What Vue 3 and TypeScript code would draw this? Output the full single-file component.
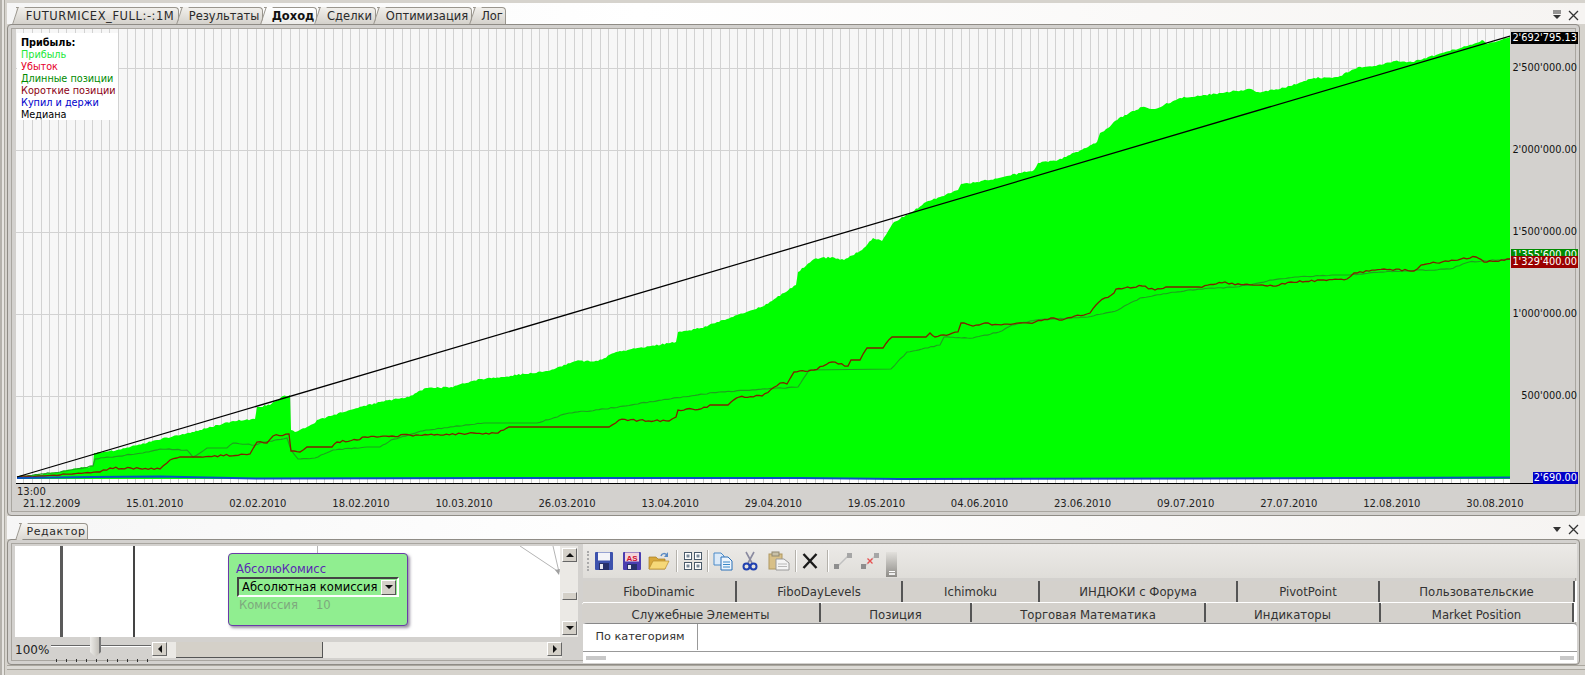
<script setup lang="ts">
type Pt = [number, number];

const topTabs = [
  { label: 'FUTURMICEX_FULL:-:1M', width: 163, active: false },
  { label: 'Результаты', width: 83, active: false },
  { label: 'Доход', width: 53, active: true },
  { label: 'Сделки', width: 58, active: false },
  { label: 'Оптимизация', width: 95, active: false },
  { label: 'Лог', width: 33, active: false },
];

const legend = [
  { label: 'Прибыль:', cls: 'lg-title' },
  { label: 'Прибыль', cls: 'lg-profit' },
  { label: 'Убыток', cls: 'lg-loss' },
  { label: 'Длинные позиции', cls: 'lg-long' },
  { label: 'Короткие позиции', cls: 'lg-short' },
  { label: 'Купил и держи', cls: 'lg-hold' },
  { label: 'Медиана', cls: 'lg-median' },
];

const dates = ['21.12.2009','15.01.2010','02.02.2010','18.02.2010','10.03.2010','26.03.2010','13.04.2010','29.04.2010','19.05.2010','04.06.2010','23.06.2010','09.07.2010','27.07.2010','12.08.2010','30.08.2010'];

const AXIS_TOP = 29;
const axisLabels = [
  { text: "2'692'795.13", y: 37.5, cls: 'ax-black' },
  { text: "2'500'000.00", y: 68, cls: '' },
  { text: "2'000'000.00", y: 150, cls: '' },
  { text: "1'500'000.00", y: 232, cls: '' },
  { text: "1'000'000.00", y: 314, cls: '' },
  { text: "500'000.00", y: 396, cls: '' },
  { text: "1'355'600.00", y: 255, cls: 'ax-green' },
  { text: "1'329'400.00", y: 262, cls: 'ax-red' },
  { text: "2'690.00", y: 477.5, cls: 'ax-blue' },
].map((l) => ({ ...l, top: l.y - 6 - AXIS_TOP }));

const gridX: number[] = [];
for (let x = 23.4; x < 1510; x += 8.6) gridX.push(Math.round(x) + 0.5);
const gridY = [68.5, 150.5, 232.5, 314.5, 396.5];

const profit: Pt[] = [[17,477],[50,473],[93,466],[94,453],[117,450],[157,440],[200,430],[233,421],[255,419],[257,407],[270,405],[283,396],[290,395],[291,430],[295,432],[315,423],[317,420],[350,410],[380,402],[409,397],[426,388],[451,387],[480,379],[501,377],[548,371],[576,361],[598,361],[616,352],[651,346],[676,342],[678,332],[701,328],[737,315],[764,306],[796,285],[798,272],[814,259],[832,257],[844,260],[862,250],[873,238],[882,241],[894,222],[912,212],[928,201],[940,197],[958,190],[961,184],[977,182],[1003,177],[1034,170],[1038,163],[1058,160],[1088,147],[1097,142],[1100,133],[1108,128],[1119,118],[1142,107],[1155,109],[1180,98],[1221,93],[1251,89],[1258,92],[1280,89],[1314,78],[1338,77],[1358,67],[1376,66],[1395,61],[1412,62],[1436,55],[1476,43],[1482,40],[1487,44],[1510,37]];

const longLine: Pt[] = [[17,477],[60,472],[93,466],[95,459],[143,453],[160,449],[187,450],[193,457],[200,453],[207,448],[227,448],[233,443],[255,445],[260,443],[287,438],[291,450],[298,459],[315,458],[333,450],[367,447],[380,447],[391,440],[426,430],[484,423],[537,423],[569,413],[605,409],[662,400],[719,392],[798,387],[809,370],[891,369],[907,352],[940,345],[944,337],[973,338],[999,332],[1012,325],[1036,320],[1088,317],[1118,310],[1140,298],[1169,293],[1199,289],[1236,287],[1273,280],[1295,277],[1332,275],[1350,275],[1380,272],[1450,269],[1469,262],[1510,259]];

const shortLine: Pt[] = [[17,477],[60,475],[100,472],[110,468],[160,469],[170,460],[180,457],[200,457],[250,454],[257,442],[267,443],[273,436],[289,434],[291,451],[300,452],[307,447],[332,447],[337,442],[357,440],[365,437],[416,435],[498,433],[509,427],[609,427],[619,420],[669,421],[676,417],[678,410],[701,409],[710,405],[728,405],[739,397],[762,396],[780,383],[787,384],[794,372],[814,370],[832,362],[848,366],[851,360],[860,360],[867,348],[883,348],[892,337],[926,337],[930,333],[935,337],[958,332],[961,323],[973,326],[988,323],[992,325],[1029,323],[1051,318],[1062,320],[1090,313],[1099,302],[1114,293],[1116,289],[1142,286],[1155,290],[1166,287],[1199,287],[1225,282],[1229,284],[1253,285],[1273,286],[1291,282],[1347,279],[1354,273],[1384,269],[1414,271],[1421,265],[1476,257],[1484,262],[1510,259]];

const holdLine: Pt[] = [[17,478],[93,477],[160,476.5],[257,478.5],[500,478],[800,478],[900,479],[1200,478.5],[1510,477.5]];

function makeRnd(start: number): () => number {
  let seed = start;
  return () => {
    seed = (seed * 1664525 + 1013904223) % 4294967296;
    return seed / 4294967296;
  };
}

function toPoints(pts: Pt[]): string {
  return pts.map(([x, y]) => `${x},${y}`).join(' ');
}

function jagged(pts: Pt[], amp: number, start: number): string {
  const rnd = makeRnd(start);
  const out: string[] = [];
  for (let i = 0; i < pts.length - 1; i++) {
    const [x0, y0] = pts[i];
    const [x1, y1] = pts[i + 1];
    const flat = Math.abs((y1 - y0) / Math.max(1, x1 - x0)) < 0.02;
    const n = flat ? 1 : Math.max(1, Math.round((x1 - x0) / 3));
    for (let k = 0; k < n; k++) {
      const t = k / n;
      const edge = k === 0 ? 0 : (rnd() - 0.5) * amp;
      out.push(`${(x0 + (x1 - x0) * t).toFixed(1)},${(y0 + (y1 - y0) * t + edge).toFixed(1)}`);
    }
  }
  const last = pts[pts.length - 1];
  out.push(`${last[0]},${last[1]}`);
  return out.join(' ');
}

function noisy(pts: Pt[]): string {
  const rnd = makeRnd(12345);
  const out: string[] = [];
  for (let i = 0; i < pts.length - 1; i++) {
    const [x0, y0] = pts[i];
    const [x1, y1] = pts[i + 1];
    const n = Math.max(1, Math.round((x1 - x0) / 2));
    for (let k = 0; k < n; k++) {
      const t = k / n;
      const edge = k === 0 ? 0 : (rnd() - 0.5) * 1.6;
      out.push(`${(x0 + (x1 - x0) * t).toFixed(1)},${(y0 + (y1 - y0) * t + edge).toFixed(1)}`);
    }
  }
  out.push('1510,37');
  return `17,479 ${out.join(' ')} 1510,479`;
}

const profitArea = noisy(profit);
const longPts = jagged(longLine, 1, 77);
const shortPts = jagged(shortLine, 2, 991);
const holdPts = toPoints(holdLine);

const paletteTop = [
  { label: 'FiboDinamic', width: 154 },
  { label: 'FiboDayLevels', width: 166 },
  { label: 'Ichimoku', width: 137 },
  { label: 'ИНДЮКИ с Форума', width: 198 },
  { label: 'PivotPoint', width: 142 },
  { label: 'Пользовательские', width: 195 },
];
const paletteBottom = [
  { label: 'Служебные Элементы', width: 239 },
  { label: 'Позиция', width: 151 },
  { label: 'Торговая Математика', width: 234 },
  { label: 'Индикаторы', width: 175 },
  { label: 'Market Position', width: 193 },
];
const sliderTicks = [0, 10, 20, 30, 40, 50, 60, 70, 80, 90];
</script>

<template>
  <div class="root">
    <section class="dock">
      <header class="dock-head head-top">
        <div class="tabs">
          <div
            v-for="t in topTabs"
            :key="t.label"
            class="tab"
            :class="{ active: t.active }"
            :style="{ width: t.width + 'px' }"
          >{{ t.label }}</div>
        </div>
        <div class="head-icons">
          <svg width="10" height="10" viewBox="0 0 10 10"><path d="M1 1h8M1 3h8" stroke="#333" stroke-width="1" /><path d="M1 5h8L5 9z" fill="#333" /></svg>
          <svg width="11" height="11" viewBox="0 0 11 11"><path d="M1 1l9 9M10 1l-9 9" stroke="#333" stroke-width="1.3" /></svg>
        </div>
      </header>
      <div class="panel panel-top">
        <div class="chart-row">
          <div class="plot">
            <svg class="plot-svg" width="1494" height="454" viewBox="16 29 1494 454">
              <rect x="16" y="29" width="1494" height="454" fill="#f7f7f7" />
              <line v-for="x in gridX" :key="x" :x1="x" :x2="x" y1="29" y2="483" stroke="#d2d2d2" />
              <line v-for="y in gridY" :key="y" x1="16" x2="1510" :y1="y" :y2="y" stroke="#d2d2d2" />
              <rect x="16" y="479" width="1494" height="4" fill="#ffffff" opacity="0.7" />
              <line v-for="x in gridX" :key="'b' + x" :x1="x" :x2="x" y1="479" y2="483" stroke="#cccccc" />
              <polygon :points="profitArea" fill="#00ff00" />
              <polyline :points="longPts" fill="none" stroke="#1f9e1f" stroke-width="1.1" />
              <polyline :points="shortPts" fill="none" stroke="#7e2200" stroke-width="1.3" />
              <polyline :points="holdPts" fill="none" stroke="#0a4fc4" stroke-width="2" />
              <line x1="17" y1="477" x2="1510" y2="36" stroke="#000000" stroke-width="1.3" />
            </svg>
            <div class="legend">
              <div v-for="l in legend" :key="l.cls" :class="l.cls">{{ l.label }}</div>
            </div>
          </div>
          <div class="axis">
            <span
              v-for="a in axisLabels"
              :key="a.text"
              class="ax-label"
              :class="a.cls"
              :style="{ top: a.top + 'px' }"
            >{{ a.text }}</span>
          </div>
        </div>
        <div class="time-row">13:00</div>
        <div class="date-row">
          <span v-for="d in dates" :key="d" class="date">{{ d }}</span>
        </div>
      </div>
    </section>

    <section class="dock">
      <header class="dock-head head-bottom">
        <div class="tabs">
          <div class="tab tab-editor">Редактор</div>
        </div>
        <div class="head-icons">
          <svg width="10" height="10" viewBox="0 0 10 10"><path d="M1 3h8L5 8z" fill="#333" /></svg>
          <svg width="11" height="11" viewBox="0 0 11 11"><path d="M1 1l9 9M10 1l-9 9" stroke="#333" stroke-width="1.3" /></svg>
        </div>
      </header>
      <div class="panel panel-bottom">
        <div class="editor">
          <div class="canvas-row">
            <div class="canvas">
              <svg class="wires" width="545" height="91" viewBox="15 546 545 91">
                <rect x="60" y="546" width="3" height="91" fill="#5a5a5a" />
                <rect x="133" y="546" width="2" height="91" fill="#444444" />
                <path d="M317.5 546v7M520 546l39 26M553 546l6 26" stroke="#b4b4b4" fill="none" />
                <path d="M559 575l-4-5 5-1z" fill="#a0a0a0" />
              </svg>
              <div class="node">
                <div class="node-title">АбсолюКомисс</div>
                <div class="node-select">
                  <span class="node-select-text">Абсолютная комиссия</span>
                  <span class="node-select-btn"><i class="arrow-down"></i></span>
                </div>
                <div class="node-param"><span>Комиссия</span><span>10</span></div>
              </div>
            </div>
            <div class="vscroll">
              <span class="sbtn"><i class="arrow-up"></i></span>
              <span class="vthumb"></span>
              <span class="sbtn sbtn-down"><i class="arrow-down"></i></span>
            </div>
          </div>
          <div class="bottom-bar">
            <span class="zoom-text">100%</span>
            <div class="slider">
              <span class="slider-line"></span>
              <span class="slider-thumb"></span>
              <span class="slider-ticks"><i v-for="t in sliderTicks" :key="t"></i></span>
            </div>
            <div class="hscroll">
              <span class="sbtn"><i class="arrow-left"></i></span>
              <span class="hthumb"></span>
              <span class="sbtn sbtn-right"><i class="arrow-right"></i></span>
            </div>
          </div>
        </div>

        <div class="side">
          <div class="toolbar">
            <span class="grip"></span>
            <svg class="ic ml-3" viewBox="0 0 20 20"><rect x="1" y="1" width="18" height="18" rx="1" fill="#3d52ad" /><rect x="4" y="1.500" width="12" height="8" fill="#f4f4f8" /><rect x="5" y="12" width="10" height="7" fill="#26306a" /><rect x="6" y="13" width="3" height="5" fill="#e8e8f0" /></svg>
            <svg class="ic ml-8" viewBox="0 0 20 20"><rect x="1" y="1" width="18" height="18" rx="1" fill="#4a3db0" /><rect x="3" y="1.500" width="14" height="9" fill="#f4d4dc" /><text x="10" y="9.500" text-anchor="middle" class="as-text">AS</text><rect x="5" y="13" width="10" height="6" fill="#26306a" /><rect x="6" y="14" width="3" height="4" fill="#e8e8f0" /></svg>
            <svg class="ic-w ml-6" viewBox="0 0 22 20"><path d="M1 6h7l2 2h7v10H1z" fill="#d8a83c" stroke="#a87c20" stroke-width=".7" /><path d="M1 18l4-8h16l-4 8z" fill="#f6d878" stroke="#b88a2a" stroke-width=".7" /><path d="M13 5c1-3 4-3 6-1" fill="none" stroke="#5a8ac4" stroke-width="1.500" /><path d="M20 1v5h-4z" fill="#5a8ac4" /></svg>
            <span class="sep ml-6"></span>
            <svg class="ic ml-6" viewBox="0 0 20 20"><g fill="#fff" stroke="#4a5a6a"><rect x="1.500" y="1.500" width="7" height="7" /><rect x="11.500" y="1.500" width="7" height="7" /><rect x="1.500" y="11.500" width="7" height="7" /><rect x="11.500" y="11.500" width="7" height="7" /></g><g fill="#7a8a9a"><rect x="3.500" y="3.500" width="3" height="3" /><rect x="13.500" y="3.500" width="3" height="3" /><rect x="3.500" y="13.500" width="3" height="3" /><rect x="13.500" y="13.500" width="3" height="3" /></g></svg>
            <span class="sep ml-4"></span>
            <svg class="ic ml-5" viewBox="0 0 20 20"><path d="M1 2h7l3 3v9H1z" fill="#dceaf8" stroke="#4a8ac8" /><path d="M8 6h7l4 4v9H8z" fill="#eef5fc" stroke="#2a70b8" /><path d="M10 11h7M10 13.500h7M10 16h7" stroke="#3a88c8" /></svg>
            <svg class="ic-s ml-9" viewBox="0 0 16 20"><path d="M4 1l6 11M12 1L6 12" stroke="#8a8aa0" stroke-width="1.600" /><circle cx="4.500" cy="15.500" r="3" fill="none" stroke="#2040b0" stroke-width="2" /><circle cx="11.500" cy="15.500" r="3" fill="none" stroke="#2040b0" stroke-width="2" /></svg>
            <svg class="ic-w ml-10" viewBox="0 0 22 20"><rect x="1" y="3" width="13" height="15" fill="#d8c088" stroke="#b09860" /><rect x="4" y="1" width="7" height="4" fill="#c8c0a8" stroke="#908870" /><path d="M8 8h8l5 4v7H8z" fill="#f4f4f4" stroke="#9a9a9a" /><path d="M10 13h9M10 15.500h9" stroke="#b8b8b8" /></svg>
            <span class="sep ml-5"></span>
            <svg class="ic-s ml-6" viewBox="0 0 16 20"><path d="M1.500 3l13 14M14.500 3l-13 14" stroke="#1a1a1a" stroke-width="2.400" /></svg>
            <span class="sep ml-9"></span>
            <svg class="ic ml-5" viewBox="0 0 20 20"><path d="M4 16L16 4" stroke="#c0c0c0" stroke-width="1.400" /><rect x="1" y="13" width="5" height="5" fill="#8e8e8e" /><rect x="14" y="2" width="5" height="5" fill="#a6a6a6" /></svg>
            <svg class="ic ml-7" viewBox="0 0 20 20"><path d="M4 16L16 4" stroke="#c8c8c8" stroke-width="1.400" /><rect x="1" y="13" width="5" height="5" fill="#8e8e8e" /><rect x="14" y="2" width="5" height="5" fill="#a6a6a6" /><path d="M7.500 7.500l5 5M12.500 7.500l-5 5" stroke="#e85050" stroke-width="1.300" /></svg>
            <span class="overflow ml-6"><i></i></span>
          </div>
          <div class="pal-row pal-row-top">
            <div v-for="p in paletteTop" :key="p.label" class="pal-tab" :style="{ width: p.width + 'px' }">{{ p.label }}</div>
          </div>
          <div class="pal-row pal-row-bottom">
            <div v-for="p in paletteBottom" :key="p.label" class="pal-tab" :style="{ width: p.width + 'px' }">{{ p.label }}</div>
          </div>
          <div class="cat">
            <div class="cat-head"><span class="cat-tab">По категориям</span></div>
            <div class="cat-foot"><span class="cat-thumb"></span><span class="cat-thumb cat-thumb-r"></span></div>
          </div>
        </div>
      </div>
    </section>
    <div class="footer"></div>
  </div>
</template>

<style scoped>
.root {
  width: 1585px;
  height: 675px;
  box-sizing: border-box;
  padding: 0 0 0 7px;
  display: flex;
  flex-direction: column;
  overflow: hidden;
  background: #d6d3cd;
  box-shadow: inset 2px 0 0 #b4b1ab, inset 4px 0 0 #e6e4e0, inset 5px 0 0 #aaa79f;
  font-family: "DejaVu Sans", Verdana, sans-serif;
  color: #222;
}
.dock-head {
  display: flex;
  align-items: flex-end;
  justify-content: space-between;
  box-sizing: border-box;
  padding-left: 9px;
  background: linear-gradient(90deg, #f6f6f6, #ffffff 40%, #f6f4f2);
}
.head-top { height: 21px; margin-top: 3px; }
.head-bottom { height: 23px; }
.tabs { display: flex; gap: 1px; }
.tab {
  position: relative;
  box-sizing: border-box;
  height: 17px;
  line-height: 17px;
  font-size: 11.5px;
  text-align: center;
  white-space: nowrap;
  color: #2a2a2a;
  background: linear-gradient(#f2f0ec, #d4d1cb);
  border: 1px solid #9a968e;
  border-bottom: 0;
  border-left: 0;
  border-radius: 0 4px 0 0;
  padding-left: 6px;
}
.tab:first-child { letter-spacing: 0.55px; }
.tab::before {
  content: "";
  position: absolute;
  left: -1px;
  top: -1px;
  width: 6px;
  height: 17px;
  transform: skewX(-18deg);
  border-left: 1px solid #9a968e;
  background: inherit;
}
.tab.active { font-weight: 700; background: linear-gradient(#ffffff, #ecebe8); color: #111; }
.tab-editor {
  width: 69px;
  height: 16px;
  line-height: 16px;
  margin-left: 3px;
  font-size: 11px;
  letter-spacing: 0;
  background: linear-gradient(#f6f5f2, #dbd8d2);
}
.head-icons {
  display: flex;
  align-items: center;
  gap: 6px;
  height: 100%;
  padding-right: 6px;
  padding-top: 3px;
  box-sizing: border-box;
}
.panel {
  box-sizing: border-box;
  margin-right: 5px;
  border: 1px solid #8f8c86;
  border-radius: 4px;
  background: #d3d1ce;
  box-shadow: inset 0 0 0 3px #d3d1ce, inset 0 0 0 4px #a9a6a0;
}
.panel-top { height: 492px; padding: 4px 1px 0 8px; }
.chart-row { display: flex; height: 455px; border-bottom: 1px solid #000; box-sizing: border-box; }
.plot { position: relative; width: 1494px; height: 454px; }
.plot-svg { display: block; }
.legend {
  position: absolute;
  left: 1px;
  top: 4px;
  width: 101px;
  height: 87px;
  box-sizing: border-box;
  padding-top: 4px;
  padding-left: 4px;
  background: #ffffff;
  font-size: 9.7px;
  line-height: 12px;
  white-space: nowrap;
}
.lg-title { font-weight: 700; color: #000; }
.lg-profit { color: #20e838; }
.lg-loss { color: #e6002a; }
.lg-long { color: #008a00; }
.lg-short { color: #8b0014; }
.lg-hold { color: #0000cc; }
.lg-median { color: #000; }
.axis { position: relative; width: 68px; height: 454px; }
.ax-label {
  position: absolute;
  right: 0;
  height: 12px;
  line-height: 12px;
  font-size: 9.8px;
  padding: 0 1px;
  white-space: nowrap;
  color: #111;
}
.ax-black { background: #000; color: #fff; }
.ax-green { background: #008a00; color: #fff; height: 7px; overflow: hidden; }
.ax-red { background: #9a0000; color: #fff; }
.ax-blue { background: #0000c8; color: #fff; }
.time-row { height: 13px; line-height: 13px; font-size: 10px; padding-left: 1px; margin-top: 1px; }
.date-row { display: flex; padding-left: 7px; font-size: 10px; line-height: 12px; }
.date { width: 103.1px; flex: none; white-space: nowrap; }

.panel-bottom {
  height: 126px;
  display: flex;
  padding: 6px 2px 0 7px;
  gap: 5px;
}
.editor { width: 563px; display: flex; flex-direction: column; }
.canvas-row { display: flex; height: 91px; }
.canvas { position: relative; width: 545px; height: 91px; background: #fff; overflow: hidden; }
.wires { display: block; position: absolute; left: 0; top: 0; }
.node {
  position: absolute;
  left: 213px;
  top: 7px;
  width: 180px;
  height: 73px;
  box-sizing: border-box;
  padding: 8px 6px 0 7px;
  background: #90ee90;
  border: 1px solid #6a3aa8;
  border-radius: 4px;
  box-shadow: 2px 2px 3px rgba(70, 60, 90, 0.55);
  font-size: 11.6px;
}
.node-title { color: #5a28b4; line-height: 15px; }
.node-select {
  display: flex;
  align-items: center;
  justify-content: space-between;
  box-sizing: border-box;
  height: 20px;
  width: 162px;
  margin-left: 1px;
  background: #90ee90;
  border: 2px solid;
  border-color: #444 #fff #fff #444;
  padding-left: 3px;
  color: #000;
  white-space: nowrap;
}
.node-select-btn {
  width: 15px;
  height: 15px;
  margin-right: 1px;
  display: flex;
  align-items: center;
  justify-content: center;
  background: #d4d0c8;
  border: 1px solid;
  border-color: #fff #555 #555 #fff;
  box-sizing: border-box;
}
.node-param {
  display: flex;
  gap: 18px;
  padding-left: 3px;
  color: #7ea87e;
  line-height: 16px;
}
.arrow-down, .arrow-up, .arrow-left, .arrow-right { display: block; width: 0; height: 0; border: 4px solid transparent; }
.arrow-down { border-top-color: #111; border-bottom-width: 0; }
.arrow-up { border-bottom-color: #111; border-top-width: 0; }
.arrow-left { border-right-color: #111; border-left-width: 0; }
.arrow-right { border-left-color: #111; border-right-width: 0; }
.vscroll {
  width: 18px;
  height: 91px;
  box-sizing: border-box;
  padding: 2px 1px 2px 2px;
  display: flex;
  flex-direction: column;
  align-items: stretch;
  background: #ebe9e5;
}
.sbtn {
  flex: none;
  width: 15px;
  height: 14px;
  display: flex;
  align-items: center;
  justify-content: center;
  background: #d4d0c8;
  border: 1px solid;
  border-color: #fff #666 #666 #fff;
  box-sizing: border-box;
}
.vthumb {
  height: 8px;
  margin-top: 30px;
  background: #d4d0c8;
  border: 1px solid;
  border-color: #eee #666 #666 #eee;
  box-sizing: border-box;
}
.sbtn-down { margin-top: auto; }
.bottom-bar { display: flex; height: 26px; }
.zoom-text { width: 36px; padding-top: 6px; font-size: 12px; line-height: 15px; color: #222; }
.slider { position: relative; width: 100px; height: 26px; }
.slider-line { position: absolute; left: 0; right: 0; top: 8px; height: 1px; background: #666; box-shadow: 0 1px 0 #fff; }
.slider-thumb {
  position: absolute;
  left: 39px;
  top: 0;
  width: 11px;
  height: 20px;
  box-sizing: border-box;
  background: linear-gradient(90deg, #ecebe8, #c4c1bb 80%, #777 80%);
  clip-path: polygon(0 0, 100% 0, 100% 75%, 50% 100%, 0 75%);
}
.slider-ticks { position: absolute; left: 5px; right: 3px; top: 22px; display: flex; justify-content: space-between; }
.slider-ticks i { display: block; width: 1px; height: 3px; background: #333; }
.hscroll {
  width: 410px;
  height: 16px;
  margin: 5px 0 0 1px;
  display: flex;
  background: #ebe9e5;
}
.hthumb {
  width: 147px;
  height: 16px;
  margin-left: 9px;
  background: #d4d0c8;
  border-bottom: 1px solid #555;
  border-right: 1px solid #555;
  box-sizing: border-box;
}
.sbtn-right { margin-left: auto; }

.side { width: 994px; display: flex; flex-direction: column; margin-top: -2px; }
.toolbar {
  height: 34px;
  display: flex;
  align-items: center;
  box-sizing: border-box;
  padding-left: 4px;
  background: linear-gradient(#eceae7, #dfddd9);
}
.grip { width: 2px; height: 20px; border-left: 2px dotted #aaa; }
.ic { width: 20px; height: 20px; flex: none; }
.ic-w { width: 22px; height: 20px; flex: none; }
.ic-s { width: 16px; height: 20px; flex: none; }
.sep { width: 1px; height: 22px; background: #b4b1ab; flex: none; box-shadow: 1px 0 0 #fff; }
.as-text { font-family: "Liberation Sans", sans-serif; font-size: 8px; font-weight: 700; fill: #d01030; }
.ml-3 { margin-left: 3px; }
.ml-4 { margin-left: 4px; }
.ml-5 { margin-left: 5px; }
.ml-6 { margin-left: 6px; }
.ml-7 { margin-left: 7px; }
.ml-8 { margin-left: 8px; }
.ml-9 { margin-left: 9px; }
.ml-10 { margin-left: 10px; }
.overflow {
  width: 11px;
  height: 25px;
  margin-top: 6px;
  background: linear-gradient(#e2e0dc, #8e8c88);
  display: flex;
  align-items: flex-end;
  justify-content: center;
  padding-bottom: 2px;
  box-sizing: border-box;
}
.overflow i { display: block; width: 6px; height: 4px; border-top: 1px solid #fff; box-sizing: border-box; border-bottom: 2px solid #eee; }
.pal-row { display: flex; background: #fff; font-size: 11.7px; color: #333; overflow: hidden; }
.pal-row-top { height: 22px; margin-top: 3px; }
.pal-row-bottom { height: 19px; margin-left: -1px; }
.pal-tab {
  flex: none;
  box-sizing: border-box;
  text-align: center;
  background: #d4d1cc;
  border-right: 2px solid #555;
  white-space: nowrap;
}
.pal-row-top .pal-tab { height: 21px; line-height: 22px; }
.pal-row-bottom .pal-tab { height: 19px; line-height: 24px; border-radius: 2px 0 0 0; }
.cat {
  margin-top: 1px;
  height: 40px;
  background: #fff;
  border-top: 1px solid #888;
  border-radius: 4px 4px 0 0;
  display: flex;
  flex-direction: column;
  box-sizing: border-box;
}
.cat-head { height: 28px; flex: none; border-bottom: 1px solid #999; box-sizing: border-box; display: flex; }
.cat-tab {
  width: 115px;
  height: 26px;
  box-sizing: border-box;
  text-align: center;
  font-size: 11.3px;
  line-height: 26px;
  color: #333;
  border-right: 1px solid #999;
  background: #fff;
}
.cat-foot { height: 11px; display: flex; justify-content: space-between; padding: 4px 3px 0; box-sizing: border-box; }
.cat-thumb { width: 20px; height: 4px; background: #c8c8c8; }
.cat-thumb-r { width: 14px; }
.footer {
  flex: 1;
  background: #d6d3cd;
  box-shadow: inset 0 1px 0 #aaa79f, inset 0 4px 0 #dcdad5, inset 0 5px 0 #aaa79f;
}
</style>

<style>
html, body { margin: 0; overflow: hidden; }
</style>
